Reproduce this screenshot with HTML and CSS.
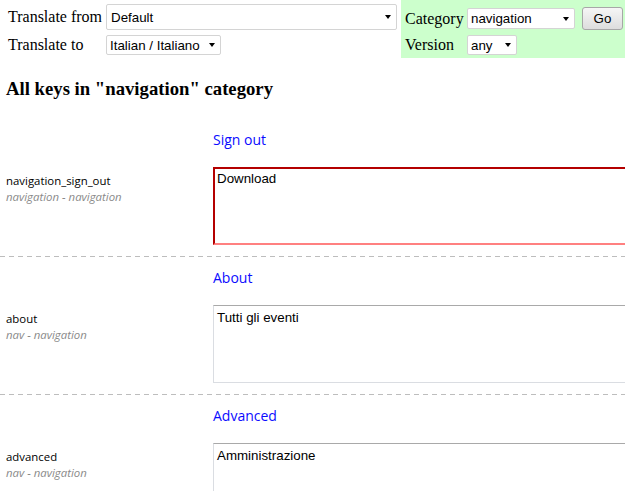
FILE: index.html
```html
<!DOCTYPE html>
<html>
<head>
<meta charset="utf-8">
<link rel="stylesheet" href="styles.css">
</head>
<body>
<div class="top">
  <div class="lang">
    <span class="lbl">Translate from</span>
    <span class="sel sel-from"><select><option>Default</option></select></span>
    <span class="lbl">Translate to</span>
    <span class="sel sel-to"><select><option>Italian / Italiano</option></select></span>
  </div>
  <div class="filter">
    <span class="lbl">Category</span>
    <span class="sel sel-cat"><select><option>navigation</option></select></span>
    <button class="go">Go</button>
    <span class="lbl">Version</span>
    <span class="sel sel-ver"><select><option>any</option></select></span>
  </div>
</div>
<h3 class="title">All keys in "navigation" category</h3>
<div class="entry">
  <div class="name">Sign out</div>
  <div class="key"><div class="k">navigation_sign_out</div><div class="cat">navigation - navigation</div></div>
  <textarea class="val invalid">Download</textarea>
</div>
<div class="entry">
  <div class="name">About</div>
  <div class="key"><div class="k">about</div><div class="cat">nav - navigation</div></div>
  <textarea class="val">Tutti gli eventi</textarea>
</div>
<div class="entry">
  <div class="name">Advanced</div>
  <div class="key"><div class="k">advanced</div><div class="cat">nav - navigation</div></div>
  <textarea class="val">Amministrazione</textarea>
</div>
</body>
</html>
```
FILE: styles.css
```css
html, body { margin: 0; padding: 0; background: #fff; overflow: hidden; }
body { font-family: "Liberation Serif", "Times New Roman", serif; font-size: 16px; color: #000; width: 625px; }

.top { display: flex; height: 58px; }
.lang {
  width: 393px; padding: 4px 0 0 8px;
  display: grid; grid-template-columns: 98px auto;
  grid-template-rows: 26px 20px; row-gap: 5px;
  align-items: center; justify-items: start;
}
.filter {
  flex: 1; background: #ccffcc; padding: 7px 0 0 4px;
  display: grid; grid-template-columns: 62px auto auto;
  grid-template-rows: 23px 20px; row-gap: 5px;
  align-items: center; justify-items: start; align-content: start;
}
.lbl { line-height: 18px; white-space: nowrap; }

.sel { position: relative; display: inline-block; }
.sel select {
  -webkit-appearance: none; appearance: none;
  font-family: "Liberation Sans", Arial, sans-serif; font-size: 13.33px;
  color: #000; background: #fff;
  border: 1px solid #d4d4d4; border-radius: 2px;
  padding: 0 0 0 3px; margin: 0; width: 100%; height: 100%;
  display: block; outline: none;
}
.sel::after {
  content: ""; position: absolute; right: 6px; top: 50%; margin-top: -2px;
  border-left: 3.5px solid transparent; border-right: 3.5px solid transparent;
  border-top: 4px solid #000; pointer-events: none;
}
.sel-from { width: 291px; height: 26px; }
.sel-from select { padding-left: 4px; }
.sel-to { width: 115px; height: 20px; }
.sel-cat { width: 108px; height: 21px; }
.sel-ver { width: 50px; height: 20px; grid-column: 2; }
.go {
  font-family: "Liberation Sans", Arial, sans-serif; font-size: 13.33px;
  width: 41px; height: 23px; margin-left: 5px; padding: 0;
  border: 1px solid #a7a7a7; border-radius: 3px;
  background: linear-gradient(#f6f6f6, #dddddd);
  color: #000;
}

.title {
  font-size: 18.72px; font-weight: bold; line-height: 22px;
  margin: 20px 0 19px 6px;
}

.entry {
  display: grid; grid-template-columns: 207px 1fr;
  padding: 11px 0 12px 6px;
  background: repeating-linear-gradient(to right, #bdbdbd 0 5px, transparent 5px 9px) left bottom / 100% 1px no-repeat;
}
.name {
  grid-column: 2; font-family: "Open Sans", "Noto Sans", sans-serif;
  font-size: 14px; line-height: 20px; color: #0b0bff; padding-bottom: 17px;
}
.key {
  grid-column: 1; font-family: "Open Sans", "Noto Sans", sans-serif;
  font-size: 11.4px; line-height: 16px; padding-top: 6px;
}
.k { color: #000; }
.cat { color: #8a8a8a; font-style: italic; }
.val {
  grid-column: 2; width: 600px; height: 78px; box-sizing: border-box;
  font-family: "Liberation Sans", Arial, sans-serif; font-size: 13.33px; line-height: 16px;
  color: #000; resize: none; margin: 0; outline: none;
  border: 1px solid #dadde2; border-top-color: #a9a9a9;
  padding: 4px 3px;
}
.val.invalid {
  border: 2px solid #b40000; border-bottom-color: #ff8080; border-right-color: #ff8080;
  padding: 2px 2px;
}
```
